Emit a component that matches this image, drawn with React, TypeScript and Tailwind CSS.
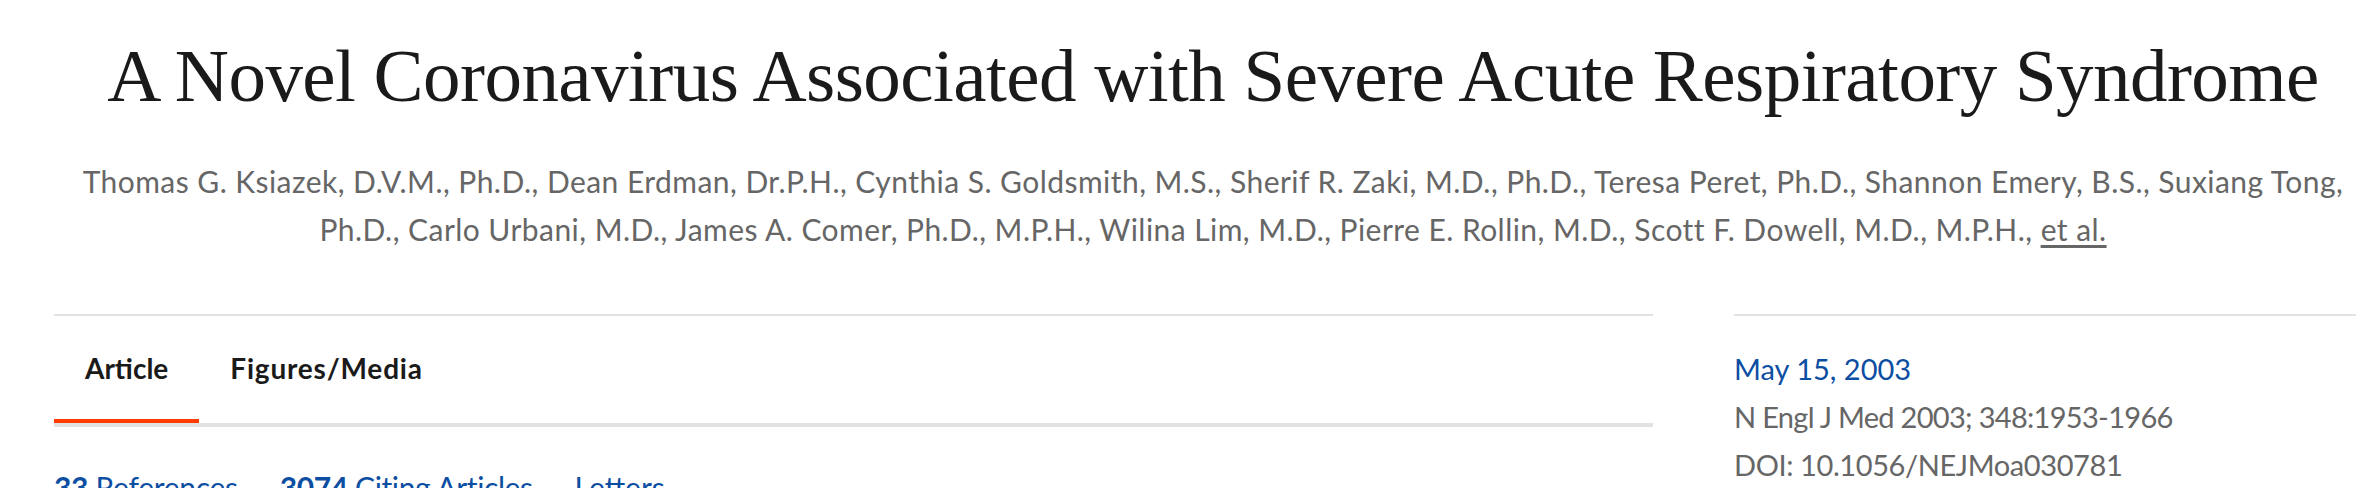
export default function App() {
  return (
    <div className="w-[2356px] h-[488px] overflow-hidden bg-white font-['Lato',_'Noto_Sans',_sans-serif]">
      <header className="pl-[70px] text-center">
        <h1 className="pt-[38px] text-[75px] leading-[75px] tracking-[-0.55px] text-[#1a1a1a] font-['Liberation_Serif',_serif]">
          A Novel Coronavirus Associated with Severe Acute Respiratory Syndrome
        </h1>
        <p className="mt-[44px] text-[30px] leading-[48px] tracking-[0.45px] text-[#666666]">
          Thomas G. Ksiazek, D.V.M., Ph.D., Dean Erdman, Dr.P.H., Cynthia S. Goldsmith, M.S., Sherif R. Zaki, M.D.,
          Ph.D., Teresa Peret, Ph.D., Shannon Emery, B.S., Suxiang Tong,
          <br />
          Ph.D., Carlo Urbani, M.D., James A. Comer, Ph.D., M.P.H., Wilina Lim, M.D., Pierre E. Rollin, M.D., Scott F.
          Dowell, M.D., M.P.H., <span className="underline underline-offset-4">et al.</span>
        </p>
      </header>

      <div className="mt-[61px] flex gap-[81px] pl-[54px]">
        <section className="w-[1599px] shrink-0 border-t-2 border-[#e2e2e2]">
          <nav className="flex border-b-4 border-[#e2e2e2]">
            <a className="border-b-4 border-[#ff3c00] px-[31px] pt-[34px] pb-[33px] text-[28px] font-bold leading-[36px] text-[#1a1a1a]">
              Article
            </a>
            <a className="border-b-4 border-transparent px-[31px] pt-[34px] pb-[33px] text-[28px] font-bold leading-[36px] tracking-[0.8px] text-[#1a1a1a]">
              Figures/Media
            </a>
          </nav>
          <div className="mt-[36px] flex gap-[42px] text-[30px] leading-[48px] text-[#0c4ea2]">
            <a className="tracking-[-0.3px]">
              <span className="font-bold">33</span> References
            </a>
            <a className="tracking-[-0.4px]">
              <span className="font-bold">3074</span> Citing Articles
            </a>
            <a>Letters</a>
          </div>
        </section>

        <aside className="flex-1 border-t-2 border-[#e2e2e2] pt-[29px] text-[29px] leading-[48px]">
          <p className="text-[#0c4ea2]">May 15, 2003</p>
          <p className="tracking-[-0.7px] text-[#666666]">N Engl J Med 2003; 348:1953-1966</p>
          <p className="tracking-[-0.4px] text-[#666666]">DOI: 10.1056/NEJMoa030781</p>
        </aside>
      </div>
    </div>
  )
}
